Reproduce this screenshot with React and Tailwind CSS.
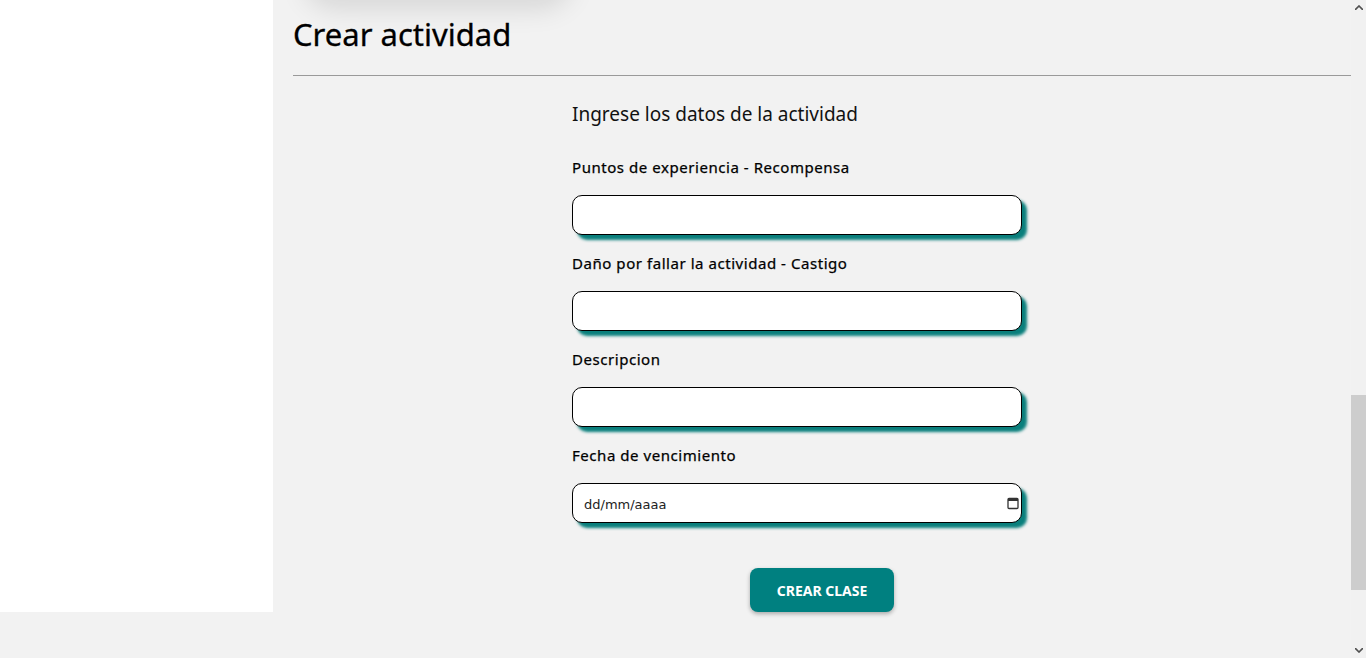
import React, { useState } from 'react';

const labelClass = 'text-[15px] font-normal text-black tracking-[0.55px] leading-[20px] mb-[18px]';

const Field = ({ label, name, value, onChange }) => (
  <div className="flex flex-col">
    <label htmlFor={name} className={labelClass} style={{ WebkitTextStroke: '0.25px black' }}>
      {label}
    </label>
    <input
      id={name}
      name={name}
      value={value}
      onChange={onChange}
      className="w-[450px] h-[40px] px-3 bg-white border border-black rounded-[10px] shadow-[5px_5px_3px_#0a7f7c] outline-none text-[14px]"
    />
  </div>
);

const Scrollbar = () => (
  <div className="w-[15px] h-full bg-[#f1f1f1] flex flex-col items-center shrink-0">
    <div className="h-[15px] flex items-center justify-center">
      <svg width="8" height="5" viewBox="0 0 8 5"><path d="M0 5 L4 1 L8 5" fill="none" stroke="#505050" strokeWidth="1.6" /></svg>
    </div>
    <div className="flex-1 w-full flex flex-col">
      <div className="h-[380px]" />
      <div className="h-[195px] bg-[#cdcdcd]" />
    </div>
    <div className="h-[15px] flex items-center justify-center">
      <svg width="8" height="5" viewBox="0 0 8 5"><path d="M0 0 L4 4 L8 0" fill="none" stroke="#505050" strokeWidth="1.6" /></svg>
    </div>
  </div>
);

export default function App() {
  const [form, setForm] = useState({ xp: '', damage: '', description: '', date: '' });
  const handleChange = e => setForm(prev => ({ ...prev, [e.target.name]: e.target.value }));

  return (
    <div className="h-screen flex bg-[#f2f2f2] overflow-hidden" style={{ fontFamily: '"Noto Sans", "Open Sans", sans-serif' }}>
      <div className="flex-1 flex items-start">
        <aside className="w-[273px] h-[612px] bg-white shrink-0" />
        <main className="flex-1 pl-5">
          <div className="w-[250px] h-[40px] -mt-[40px] ml-[20px] rounded-full bg-[#f2f2f2] shadow-[0_0_28px_8px_rgba(0,0,0,0.12)]" />
          <h1 className="text-[31px] leading-[36px] text-black mt-[16px]" style={{ WebkitTextStroke: '0.3px black' }}>Crear actividad</h1>
          <hr className="mt-[23px] border-0 border-t border-[#9a9a9a]" />
          <div className="pl-[279px] pt-[25px]">
            <h2 className="text-[19px] leading-[26px] text-[#111]">Ingrese los datos de la actividad</h2>
            <div className="mt-[30px] flex flex-col gap-[18px]">
              <Field label="Puntos de experiencia - Recompensa" name="xp" value={form.xp} onChange={handleChange} />
              <Field label="Daño por fallar la actividad - Castigo" name="damage" value={form.damage} onChange={handleChange} />
              <Field label="Descripcion" name="description" value={form.description} onChange={handleChange} />
              <div className="flex flex-col">
                <label htmlFor="date" className={labelClass} style={{ WebkitTextStroke: '0.25px black' }}>
                  Fecha de vencimiento
                </label>
                <div className="relative w-[450px]">
                  <input
                    id="date"
                    name="date"
                    value={form.date}
                    onChange={handleChange}
                    placeholder="dd/mm/aaaa"
                    className="w-[450px] h-[40px] px-[11px] pt-[3px] bg-white border border-black rounded-[10px] shadow-[5px_5px_3px_#0a7f7c] outline-none text-[13px] placeholder:text-[#222]"
                    style={{ fontFamily: '"DejaVu Sans", sans-serif' }}
                  />
                  <svg className="absolute right-[3px] top-[14px]" width="12" height="13" viewBox="0 0 12 13">
                    <rect x="1" y="1.5" width="10" height="10" rx="1" fill="none" stroke="#333" strokeWidth="1.3" />
                    <rect x="1" y="1.5" width="10" height="2.5" fill="#333" />
                  </svg>
                </div>
              </div>
            </div>
            <button
              type="button"
              className="mt-[45px] ml-[178px] w-[144px] h-[44px] bg-[#008080] text-white text-[14px] font-bold rounded-[8px] shadow-[0_2px_4px_rgba(0,0,0,0.3)]"
            >
              CREAR CLASE
            </button>
          </div>
        </main>
      </div>
      <Scrollbar />
    </div>
  );
}
